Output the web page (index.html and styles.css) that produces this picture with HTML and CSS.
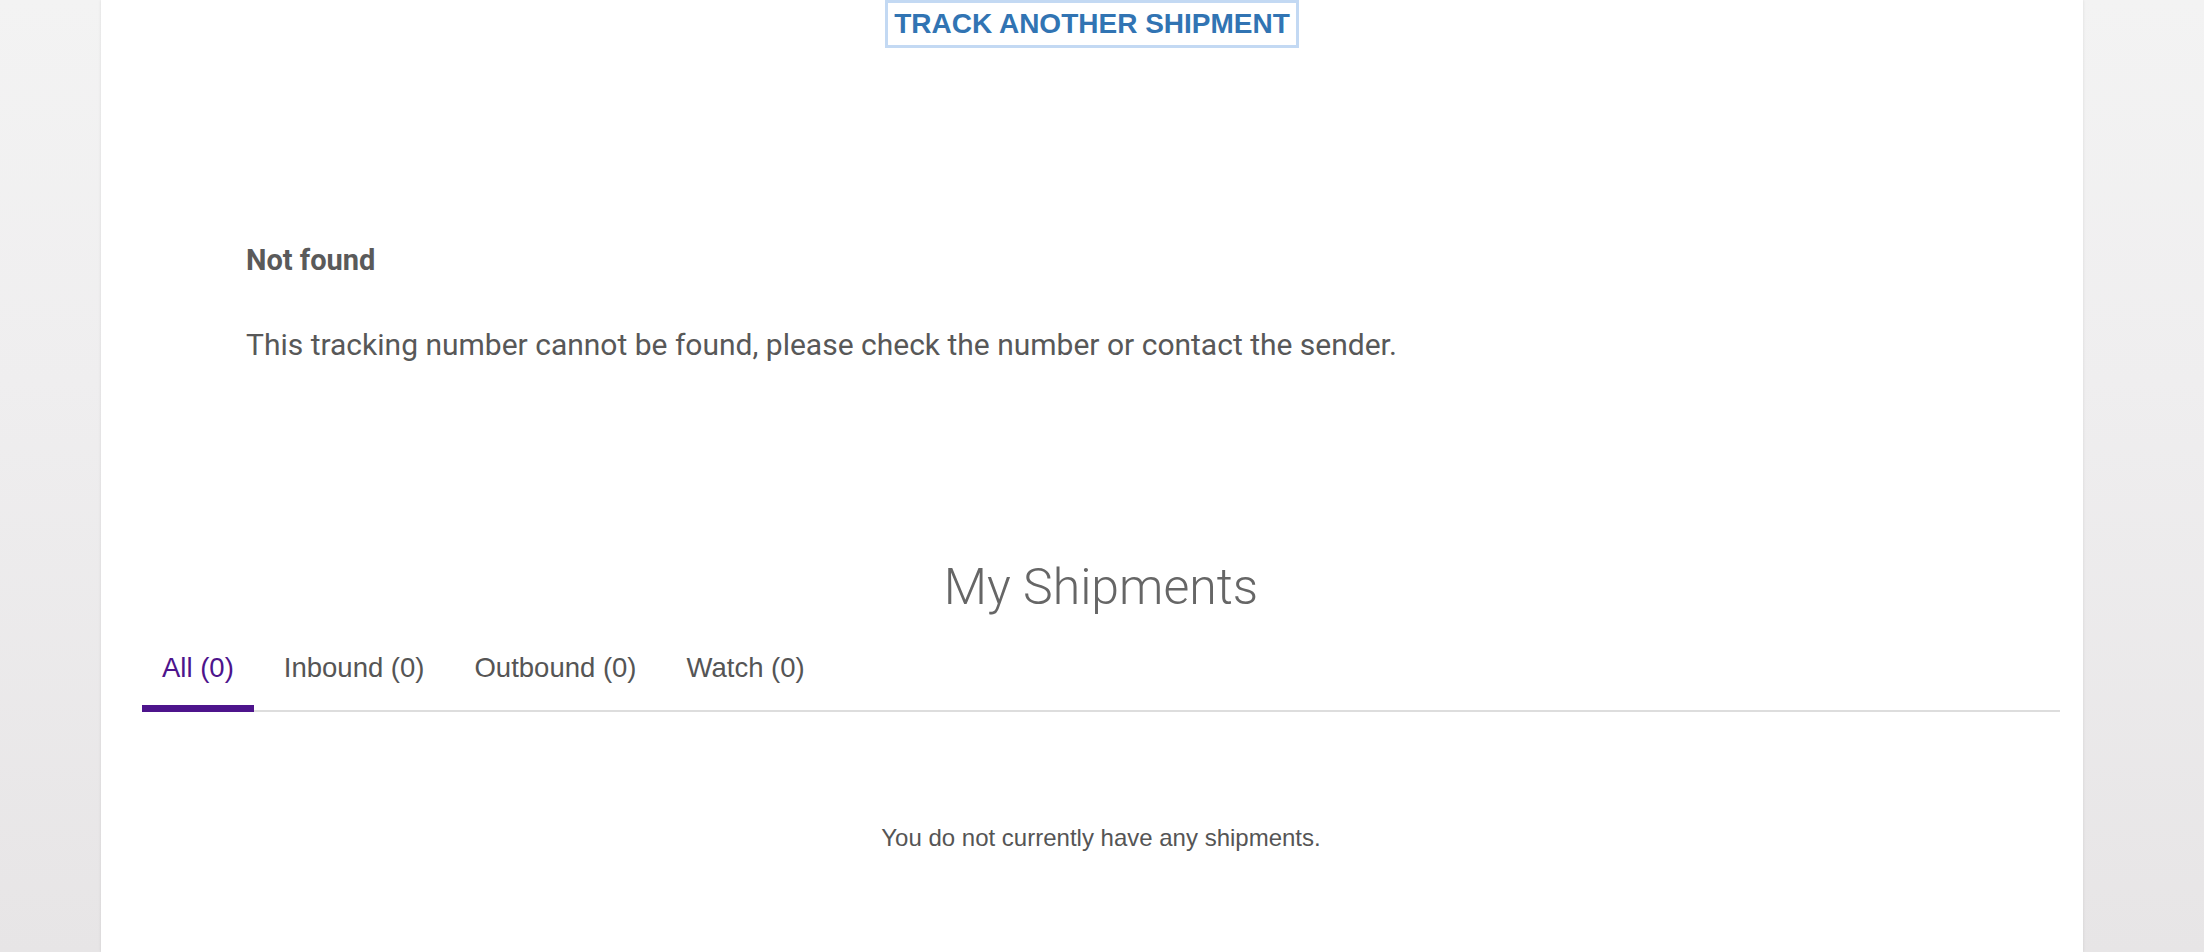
FILE: index.html
```html
<!DOCTYPE html>
<html lang="en">
<head>
<meta charset="utf-8">
<title>Track Shipment</title>
<link rel="stylesheet" href="styles.css">
</head>
<body>
<div class="page">
  <main class="panel">
    <div class="track-row">
      <button class="track-btn" type="button">TRACK ANOTHER SHIPMENT</button>
    </div>
    <section class="result">
      <h2 class="result-title">Not found</h2>
      <p class="result-text">This tracking number cannot be found, please check the number or contact the sender.</p>
    </section>
    <section class="shipments">
      <h1 class="shipments-title">My Shipments</h1>
      <ul class="tabs">
        <li class="tab active">All (0)</li>
        <li class="tab">Inbound (0)</li>
        <li class="tab">Outbound (0)</li>
        <li class="tab">Watch (0)</li>
      </ul>
      <p class="empty">You do not currently have any shipments.</p>
    </section>
  </main>
</div>
</body>
</html>
```
FILE: styles.css
```css
html, body {
  margin: 0;
  padding: 0;
}
body {
  background: linear-gradient(to bottom, #f3f3f3 0%, #efeeef 40%, #e7e5e6 100%);
  min-height: 952px;
  overflow: hidden;
}
.page {
  display: flex;
}
.panel {
  margin-left: 101px;
  width: 1982px;
  min-height: 952px;
  background: #ffffff;
  box-shadow: 0 0 3px rgba(0, 0, 0, 0.10);
}
.track-row {
  text-align: center;
}
.track-btn {
  display: inline-block;
  margin: 0;
  height: 48px;
  padding: 5px 6px;
  border: 3px solid #c3d9f3;
  background: #ffffff;
  color: #3174b3;
  font-family: "Liberation Sans", Arial, sans-serif;
  font-weight: 700;
  font-size: 28px;
  line-height: 32px;
  cursor: pointer;
}
.result {
  margin: 194px 0 0 145px;
  font-family: Roboto, "Noto Sans", sans-serif;
  color: #555555;
}
.result-title {
  margin: 0;
  font-size: 29px;
  line-height: 36px;
  font-weight: 700;
  color: #5a5a5a;
}
.result-text {
  margin: 47px 0 0;
  font-size: 30px;
  line-height: 40px;
  font-weight: 400;
  color: #585858;
}
.shipments {
  margin: 192px 23px 0 41px;
}
.shipments-title {
  margin: 0;
  text-align: center;
  font-family: Roboto, "Noto Sans", sans-serif;
  font-weight: 300;
  font-size: 50px;
  line-height: 60px;
  color: #666666;
}
.tabs {
  list-style: none;
  margin: 23px 0 0;
  padding: 0;
  display: flex;
  gap: 10px;
  border-bottom: 2px solid #dddddd;
}
.tab {
  padding: 10px 20px 19px;
  margin-bottom: -2px;
  border-bottom: 7px solid transparent;
  font-family: "Liberation Sans", Arial, sans-serif;
  font-size: 27.5px;
  line-height: 36px;
  color: #555555;
}
.tab.active {
  color: #4d148c;
  border-bottom-color: #4d148c;
}
.empty {
  margin: 111px 0 0;
  text-align: center;
  font-family: "Liberation Sans", Arial, sans-serif;
  font-size: 24px;
  line-height: 30px;
  color: #555555;
}
```
